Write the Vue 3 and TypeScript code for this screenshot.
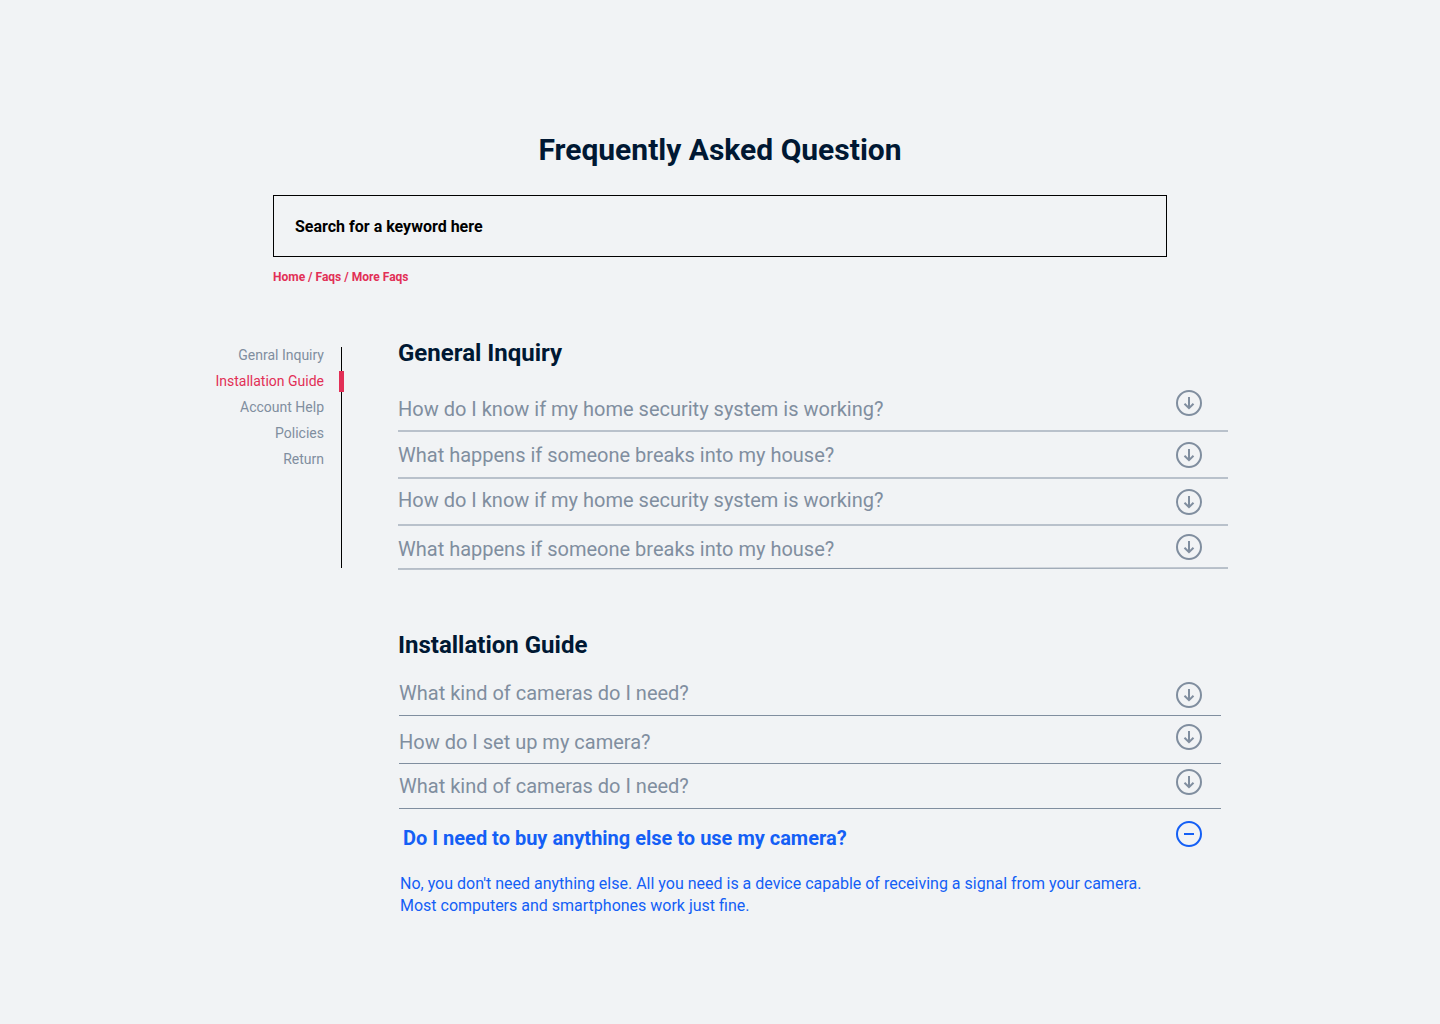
<script setup lang="ts">
import { ref } from 'vue'

interface Faq {
  id: string
  question: string
  align: string
  answer?: string
}

interface Topic {
  label: string
  target: string
}

const topics: Topic[] = [
  { label: 'Genral Inquiry', target: 'general' },
  { label: 'Installation Guide', target: 'installation' },
  { label: 'Account Help', target: 'account' },
  { label: 'Policies', target: 'policies' },
  { label: 'Return', target: 'return' },
]

const general: Faq[] = [
  { id: 'g1', question: 'How do I know if my home security system is working?', align: 'spread' },
  { id: 'g2', question: 'What happens if someone breaks into my house?', align: 'middle' },
  { id: 'g3', question: 'How do I know if my home security system is working?', align: 'text-high' },
  { id: 'g4', question: 'What happens if someone breaks into my house?', align: 'text-low' },
]

const installation: Faq[] = [
  { id: 'i1', question: 'What kind of cameras do I need?', align: 'text-high' },
  { id: 'i2', question: 'How do I set up my camera?', align: 'split' },
  { id: 'i3', question: 'What kind of cameras do I need?', align: 'icon-high' },
  {
    id: 'i4',
    question: 'Do I need to buy anything else to use my camera?',
    align: 'split',
    answer:
      "No, you don't need anything else. All you need is a device capable of receiving a signal from your camera. Most computers and smartphones work just fine.",
  },
]

const activeTopic = ref('installation')
const openId = ref('i4')
const keyword = ref('')

function toggle(id: string): void {
  openId.value = openId.value === id ? '' : id
}
</script>

<template>
  <main class="page">
    <header class="top">
      <h1>Frequently Asked Question</h1>
      <input
        v-model="keyword"
        class="search"
        type="search"
        aria-label="Search for a keyword here"
        placeholder="Search for a keyword here"
      />
      <nav class="crumbs" aria-label="Breadcrumb">
        <a href="#home">Home</a> / <a href="#faqs">Faqs</a> / <a href="#more">More Faqs</a>
      </nav>
    </header>

    <div class="body">
      <nav class="topics" aria-label="Topics">
        <a
          v-for="topic in topics"
          :key="topic.target"
          :href="'#' + topic.target"
          :class="{ active: topic.target === activeTopic }"
          @click="activeTopic = topic.target"
          >{{ topic.label }}</a
        >
      </nav>

      <section id="general" class="general">
        <h2>General Inquiry</h2>
        <div v-for="faq in general" :key="faq.id" class="item">
          <button type="button" class="row" :class="faq.align" @click="toggle(faq.id)">
            <span class="question">{{ faq.question }}</span>
            <svg class="icon" viewBox="0 0 26 26" aria-hidden="true">
              <circle cx="13" cy="13" r="12" />
              <path d="M13 7V18M8.5 13.7L13 18.2L17.5 13.7" />
            </svg>
          </button>
        </div>
        <svg class="closing" viewBox="0 0 830 3" preserveAspectRatio="none" aria-hidden="true">
          <path d="M0 2L830 1" />
        </svg>
      </section>

      <section id="installation" class="installation">
        <h2>Installation Guide</h2>
        <div
          v-for="faq in installation"
          :key="faq.id"
          class="item"
          :class="{ open: faq.id === openId }"
        >
          <button
            type="button"
            class="row"
            :class="faq.align"
            :aria-expanded="faq.id === openId"
            @click="toggle(faq.id)"
          >
            <span class="question">{{ faq.question }}</span>
            <svg class="icon" viewBox="0 0 26 26" aria-hidden="true">
              <circle cx="13" cy="13" r="12" />
              <path v-if="faq.id === openId" d="M8 13H18" />
              <path v-else d="M13 7V18M8.5 13.7L13 18.2L17.5 13.7" />
            </svg>
          </button>
          <p v-if="faq.answer && faq.id === openId" class="answer">{{ faq.answer }}</p>
        </div>
      </section>
    </div>
  </main>
</template>

<style>
body {
  background: #f1f3f5;
}
</style>

<style scoped>
.page {
  font-family: Roboto, 'Liberation Sans', sans-serif;
  color: #001833;
  padding: 132px 24px 96px;
}

.top {
  max-width: 894px;
  margin: 0 auto;
}

h1 {
  margin: 0 0 27px;
  font-size: 30px;
  line-height: 36px;
  font-weight: 700;
  text-align: center;
}

.search {
  display: block;
  box-sizing: border-box;
  width: 100%;
  height: 62px;
  padding: 0 21px;
  border: 1px solid #000;
  border-radius: 0;
  background: transparent;
  appearance: none;
  font: 700 16px/20px Roboto, 'Liberation Sans', sans-serif;
  color: #000;
}

.search::placeholder {
  color: #000;
  opacity: 1;
}

.crumbs {
  margin-top: 12px;
  font-size: 12px;
  line-height: 16px;
  font-weight: 700;
  color: #e22f56;
}

a {
  color: inherit;
  text-decoration: none;
}

.body {
  display: grid;
  grid-template-columns: 130px minmax(0, 1fr);
  column-gap: 56px;
  row-gap: 61px;
  max-width: 1016px;
  margin: 54px auto 0;
}

.topics {
  display: flex;
  flex-direction: column;
  align-items: flex-end;
  gap: 10px;
  margin: 8px 0 2px;
  padding-right: 17px;
  border-right: 1px solid #000;
  font-size: 14px;
  line-height: 16px;
  color: #808e9f;
}

.topics a {
  position: relative;
}

.topics .active {
  color: #e22f56;
}

.topics .active::after {
  content: '';
  position: absolute;
  top: -2px;
  right: -20px;
  width: 5px;
  height: 21px;
  background: #e22f56;
}

.general,
.installation {
  grid-column: 2;
}

h2 {
  margin: 0 0 16px;
  font-size: 24px;
  line-height: 28px;
  font-weight: 700;
}

.row {
  display: flex;
  align-items: center;
  justify-content: space-between;
  width: 100%;
  padding: 0 26px 0 0;
  border: 0;
  background: none;
  font: 400 20px/24px Roboto, 'Liberation Sans', sans-serif;
  color: #808e9f;
  text-align: left;
  cursor: pointer;
}

.general .row {
  height: 45px;
}

.general .item {
  border-bottom: 2px solid #b9c1cb;
}

.general .item:nth-of-type(1) .row {
  height: 47px;
}

.general .item:nth-of-type(4) {
  border-bottom: 0;
}

.general .item:nth-of-type(4) .row {
  height: 41px;
}

.closing {
  display: block;
  width: 100%;
  height: 3px;
  fill: none;
  stroke: #808e9f;
}

.installation .item {
  margin: 0 7px 0 1px;
  border-bottom: 1px solid #808e9f;
}

.installation .row {
  height: 44px;
  padding-right: 19px;
}

.installation .item:nth-of-type(1) .row {
  height: 40px;
}

.installation .item:nth-of-type(2) .row {
  height: 47px;
}

.installation .item.open {
  border-bottom: 0;
}

.installation .open .row {
  height: 54px;
  padding-left: 4px;
  font-weight: 700;
  color: #145ff5;
}

.icon {
  flex: none;
  width: 26px;
  height: 26px;
  fill: none;
  stroke: currentColor;
  stroke-width: 2;
}

.spread .question,
.split .question,
.text-low .question {
  padding-top: 4px;
}

.text-high .question {
  padding-bottom: 4px;
}

.spread .icon,
.icon-high .icon {
  margin-bottom: 8px;
}

.split .icon {
  margin-bottom: 5px;
}

.answer {
  max-width: 760px;
  margin: 10px 0 0;
  padding-left: 1px;
  font-size: 16px;
  line-height: 22px;
  color: #145ff5;
}
</style>
